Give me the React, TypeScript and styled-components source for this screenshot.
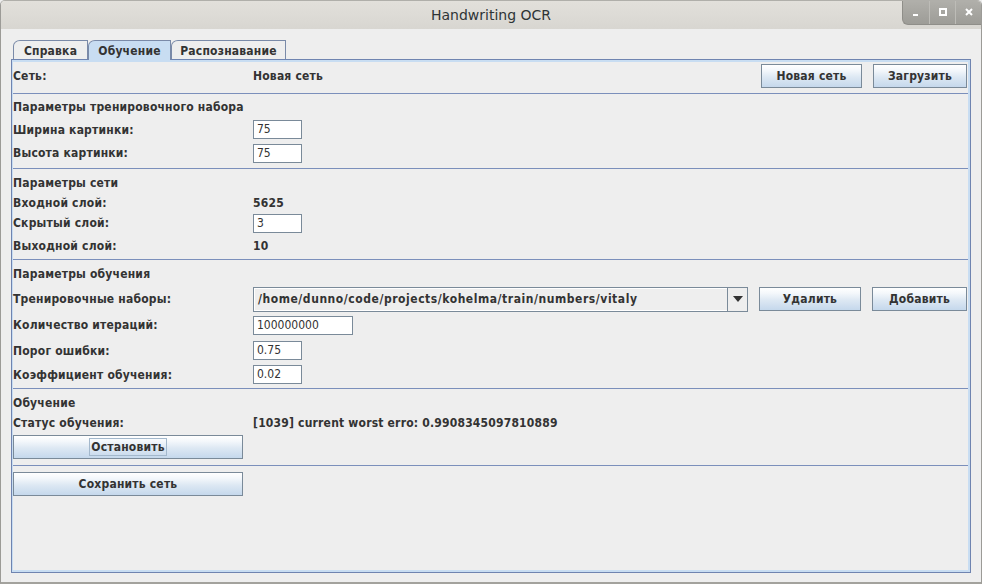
import React from "react";
import styled, { createGlobalStyle } from "styled-components";

const Global = createGlobalStyle`
  html, body { margin: 0; padding: 0; background: #eeeeee; }
  body { width: 982px; height: 584px; overflow: hidden; font-family: "DejaVu Sans Condensed", "DejaVu Sans", sans-serif; }
  * { box-sizing: border-box; }
`;

const Window = styled.div`
  width: 982px;
  height: 584px;
  display: flex;
  flex-direction: column;
  background: #eeeeee;
  border-left: 1px solid #9c9b97;
  border-right: 1px solid #9c9b97;
  border-bottom: 2px solid #a3a29d;
  border-top: 1px solid #b0afaa;
  border-radius: 5px 5px 0 0;
  overflow: hidden;
`;

const TitleBar = styled.div`
  height: 28px;
  flex: none;
  display: grid;
  grid-template-columns: 1fr auto 1fr;
  align-items: start;
  background: linear-gradient(#e2e0db, #d8d6d1);
`;

const Title = styled.div`
  grid-column: 2;
  height: 28px;
  line-height: 28px;
  font-size: 14px;
  color: #2e3436;
  font-family: "DejaVu Sans", sans-serif;
`;

const Controls = styled.div`
  grid-column: 3;
  justify-self: end;
  display: flex;
  height: 25px;
  margin-top: -1px;
  background: linear-gradient(#b1b0ab, #9d9c97);
  border-bottom-left-radius: 6px;
  border-left: 1px solid #8f8e89;
  border-bottom: 1px solid #8f8e89;
`;

const CtrlButton = styled.div<{ $first?: boolean }>`
  width: 26px;
  height: 100%;
  display: flex;
  align-items: center;
  justify-content: center;
  border-left: ${(p) => (p.$first ? "none" : "1px solid #bdbcb7")};
`;

const Content = styled.div`
  flex: 1;
  display: flex;
  flex-direction: column;
  padding: 11px 10px 9px 10px;
`;

const TabStrip = styled.div`
  display: flex;
  height: 19px;
  padding-left: 2px;
  flex: none;
`;

const Tab = styled.div<{ $active?: boolean; $w: number }>`
  width: ${(p) => p.$w}px;
  height: 19px;
  border: 1px solid #7a8aa8;
  border-bottom: none;
  border-top-left-radius: 7px 6px;
  background: ${(p) => (p.$active ? "#c8ddf2" : "#eeeeee")};
  font-size: 12px;
  font-weight: bold;
  letter-spacing: 0.2px;
  color: #333333;
  display: flex;
  align-items: center;
  justify-content: center;
  padding-top: 1px;
  position: relative;
  z-index: ${(p) => (p.$active ? 2 : 1)};
  ${(p) => (p.$active ? "height: 20px; margin-bottom: -1px;" : "")}
`;

const Panel = styled.div`
  flex: 1;
  display: flex;
  flex-direction: column;
  border: 1px solid #6f84b0;
  background: #c8ddf2;
  padding: 2px 2px 2px 1px;
`;

const Inner = styled.div`
  flex: 1;
  background: #eeeeee;
  display: flex;
  flex-direction: column;
  color: #333333;
  font-size: 12px;
  letter-spacing: 0.2px;
`;

const Row = styled.div<{ $h: number }>`
  height: ${(p) => p.$h}px;
  flex: none;
  display: flex;
  align-items: center;
`;

const ButtonRow = styled.div<{ $h: number; $pt: number }>`
  height: ${(p) => p.$h}px;
  padding-top: ${(p) => p.$pt}px;
  flex: none;
  display: flex;
  align-items: flex-start;
`;

const Label = styled.div`
  width: 240px;
  flex: none;
  font-weight: bold;
  white-space: nowrap;
`;

const Value = styled.div`
  flex: 1;
  font-weight: bold;
  white-space: nowrap;
`;

const Heading = styled.div`
  font-weight: bold;
  white-space: nowrap;
`;

const Sep = styled.div<{ $h: number }>`
  height: ${(p) => p.$h}px;
  flex: none;
  display: flex;
  align-items: center;
  &::after {
    content: "";
    display: block;
    height: 1px;
    width: 100%;
    background: #7b8fbb;
  }
`;

const Field = styled.div<{ $w: number }>`
  width: ${(p) => p.$w}px;
  height: 19px;
  background: #ffffff;
  border: 1px solid #7a8a99;
  font-size: 12px;
  letter-spacing: 0;
  color: #333333;
  padding-left: 3px;
  line-height: 17px;
  white-space: nowrap;
`;

const Button = styled.div<{ $w: number }>`
  width: ${(p) => p.$w}px;
  height: 24px;
  flex: none;
  border: 1px solid #7a8a99;
  background: linear-gradient(#ffffff 0%, #f3f7fb 25%, #dde8f3 55%, #c5d8ec 100%);
  font-size: 12px;
  font-weight: bold;
  color: #333333;
  display: flex;
  align-items: center;
  justify-content: center;
  white-space: nowrap;
`;

const Focus = styled.span`
  border: 1px solid #a3b8cc;
  padding: 1px 1px;
`;

const ButtonGroup = styled.div`
  display: flex;
  gap: 11px;
  margin-right: 1px;
`;

const Combo = styled.div`
  width: 497px;
  height: 25px;
  border: 1px solid #7a8a99;
  background: #eeeeee;
  display: flex;
  margin-right: 11px;
`;

const ComboText = styled.div`
  flex: 1;
  font-weight: bold;
  font-size: 12px;
  letter-spacing: 0.55px;
  padding-left: 3px;
  display: flex;
  align-items: center;
  border: 1px solid #ffffff;
  border-right: none;
  white-space: nowrap;
  overflow: hidden;
`;

const ComboArrow = styled.div`
  width: 20px;
  border-left: 1px solid #7a8a99;
  display: flex;
  align-items: center;
  justify-content: center;
`;

const Spacer = styled.div`
  flex: 1;
`;

export default function App() {
  return (
    <>
      <Global />
      <Window>
        <TitleBar>
          <Title>Handwriting OCR</Title>
          <Controls>
            <CtrlButton $first>
              <svg width="8" height="8" viewBox="0 0 8 8">
                <rect x="1" y="6" width="5" height="2" fill="#ffffff" />
              </svg>
            </CtrlButton>
            <CtrlButton>
              <svg width="8" height="8" viewBox="0 0 8 8">
                <rect x="1" y="1" width="6" height="6" fill="none" stroke="#ffffff" strokeWidth="2" />
              </svg>
            </CtrlButton>
            <CtrlButton>
              <svg width="8" height="8" viewBox="0 0 8 8">
                <path d="M1 1 L7 7 M7 1 L1 7" stroke="#ffffff" strokeWidth="2" />
              </svg>
            </CtrlButton>
          </Controls>
        </TitleBar>
        <Content>
          <TabStrip>
            <Tab $w={75}>Справка</Tab>
            <Tab $w={83} $active>Обучение</Tab>
            <Tab $w={115}>Распознавание</Tab>
          </TabStrip>
          <Panel>
            <Inner>
              <Row $h={28}>
                <Label>Сеть:</Label>
                <Value>Новая сеть</Value>
                <ButtonGroup>
                  <Button $w={101}>Новая сеть</Button>
                  <Button $w={94}>Загрузить</Button>
                </ButtonGroup>
              </Row>
              <Sep $h={6} />
              <Row $h={22}>
                <Heading>Параметры тренировочного набора</Heading>
              </Row>
              <Row $h={23}>
                <Label>Ширина картинки:</Label>
                <Field $w={49}>75</Field>
              </Row>
              <Row $h={24}>
                <Label>Высота картинки:</Label>
                <Field $w={49}>75</Field>
              </Row>
              <Sep $h={6} />
              <Row $h={24}>
                <Heading>Параметры сети</Heading>
              </Row>
              <Row $h={16}>
                <Label>Входной слой:</Label>
                <Value>5625</Value>
              </Row>
              <Row $h={24}>
                <Label>Скрытый слой:</Label>
                <Field $w={49}>3</Field>
              </Row>
              <Row $h={22}>
                <Label>Выходной слой:</Label>
                <Value>10</Value>
              </Row>
              <Sep $h={4} />
              <Row $h={25}>
                <Heading>Параметры обучения</Heading>
              </Row>
              <Row $h={26}>
                <Label>Тренировочные наборы:</Label>
                <Combo>
                  <ComboText>/home/dunno/code/projects/kohelma/train/numbers/vitaly</ComboText>
                  <ComboArrow>
                    <svg width="10" height="6" viewBox="0 0 10 6">
                      <path d="M0 0 L10 0 L5 6 Z" fill="#333333" />
                    </svg>
                  </ComboArrow>
                </Combo>
                <ButtonGroup>
                  <Button $w={102}>Удалить</Button>
                  <Button $w={95}>Добавить</Button>
                </ButtonGroup>
              </Row>
              <Row $h={26}>
                <Label>Количество итераций:</Label>
                <Field $w={100}>100000000</Field>
              </Row>
              <Row $h={25}>
                <Label>Порог ошибки:</Label>
                <Field $w={49}>0.75</Field>
              </Row>
              <Row $h={23}>
                <Label>Коэффициент обучения:</Label>
                <Field $w={49}>0.02</Field>
              </Row>
              <Sep $h={4} />
              <Row $h={25}>
                <Heading>Обучение</Heading>
              </Row>
              <Row $h={16}>
                <Label>Статус обучения:</Label>
                <Value>[1039] current worst erro: 0.9908345097810889</Value>
              </Row>
              <ButtonRow $h={28} $pt={4}>
                <Button $w={230}>
                  <Focus>Остановить</Focus>
                </Button>
              </ButtonRow>
              <Sep $h={12} />
              <ButtonRow $h={26} $pt={1}>
                <Button $w={230}>Сохранить сеть</Button>
              </ButtonRow>
              <Spacer />
            </Inner>
          </Panel>
        </Content>
      </Window>
    </>
  );
}
